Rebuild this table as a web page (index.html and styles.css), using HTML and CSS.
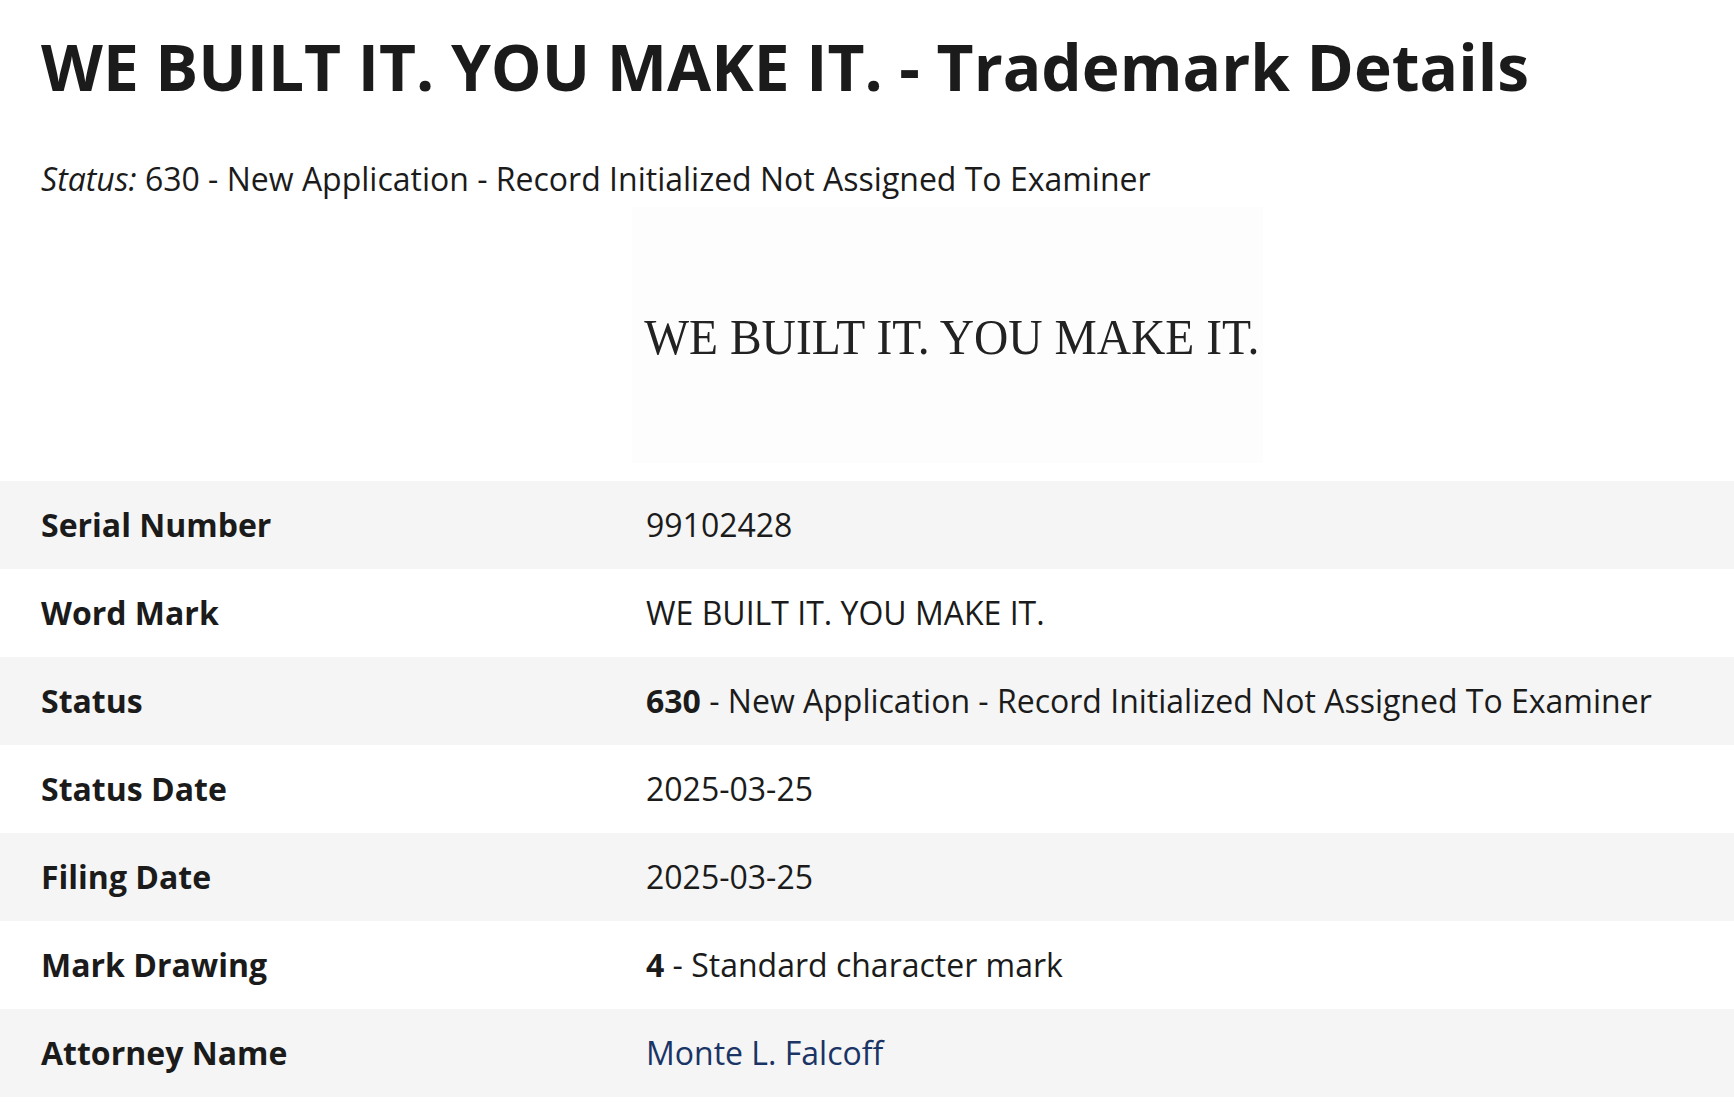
FILE: index.html
```html
<!DOCTYPE html>
<html lang="en">
<head>
<meta charset="utf-8">
<title>WE BUILT IT. YOU MAKE IT. - Trademark Details</title>
<link rel="stylesheet" href="styles.css">
</head>
<body>
<main class="page">
  <h1 class="title">WE BUILT IT. YOU MAKE IT. - Trademark Details</h1>
  <p class="status-line"><em>Status:</em> 630 - New Application - Record Initialized Not Assigned To Examiner</p>
  <div class="mark-figure">
    <div class="mark-image"><span class="mark-text">WE BUILT IT. YOU MAKE IT.</span></div>
  </div>
  <div class="details">
    <div class="row">
      <div class="label">Serial Number</div>
      <div class="value">99102428</div>
    </div>
    <div class="row">
      <div class="label">Word Mark</div>
      <div class="value">WE BUILT IT. YOU MAKE IT.</div>
    </div>
    <div class="row">
      <div class="label">Status</div>
      <div class="value"><strong>630</strong> - New Application - Record Initialized Not Assigned To Examiner</div>
    </div>
    <div class="row">
      <div class="label">Status Date</div>
      <div class="value">2025-03-25</div>
    </div>
    <div class="row">
      <div class="label">Filing Date</div>
      <div class="value">2025-03-25</div>
    </div>
    <div class="row">
      <div class="label">Mark Drawing</div>
      <div class="value"><strong>4</strong> - Standard character mark</div>
    </div>
    <div class="row">
      <div class="label">Attorney Name</div>
      <div class="value"><a class="link" href="#">Monte L. Falcoff</a></div>
    </div>
  </div>
</main>
</body>
</html>
```

FILE: styles.css
```css
html, body {
  margin: 0;
  padding: 0;
  background: #ffffff;
}

body {
  font-family: "Open Sans", "Noto Sans", "Liberation Sans", sans-serif;
  color: #1b1b1b;
}

.page {
  display: flex;
  flex-direction: column;
}

.title {
  margin: 23px 0 0 41px;
  font-size: 64px;
  font-weight: 700;
  line-height: normal;
  color: #1b1b1b;
}

.status-line {
  margin: 45px 0 0 41px;
  font-size: 32px;
  line-height: 48px;
}

.status-line em {
  font-style: italic;
}

.mark-figure {
  display: flex;
  margin: 4px 0 18px 632px;
}

.mark-image {
  width: 631px;
  height: 256px;
  background: #fdfdfd;
  display: flex;
  align-items: center;
  justify-content: center;
}

.mark-text {
  display: inline-block;
  font-family: "Liberation Serif", "Times New Roman", serif;
  font-size: 50px;
  color: #222222;
  white-space: nowrap;
  transform: scaleX(0.95);
  margin-left: 8px;
  margin-top: 3px;
}

.details {
  display: flex;
  flex-direction: column;
}

.row {
  display: grid;
  grid-template-columns: 605px 1fr;
  font-size: 32px;
  line-height: 48px;
}

.row:nth-child(odd) {
  background: #f5f5f5;
}

.label {
  padding: 20px 0 20px 41px;
  font-weight: 700;
}

.value {
  padding: 20px 20px 20px 41px;
}

.value strong {
  font-weight: 700;
}

.link {
  color: #1a3466;
  text-decoration: none;
}
```
